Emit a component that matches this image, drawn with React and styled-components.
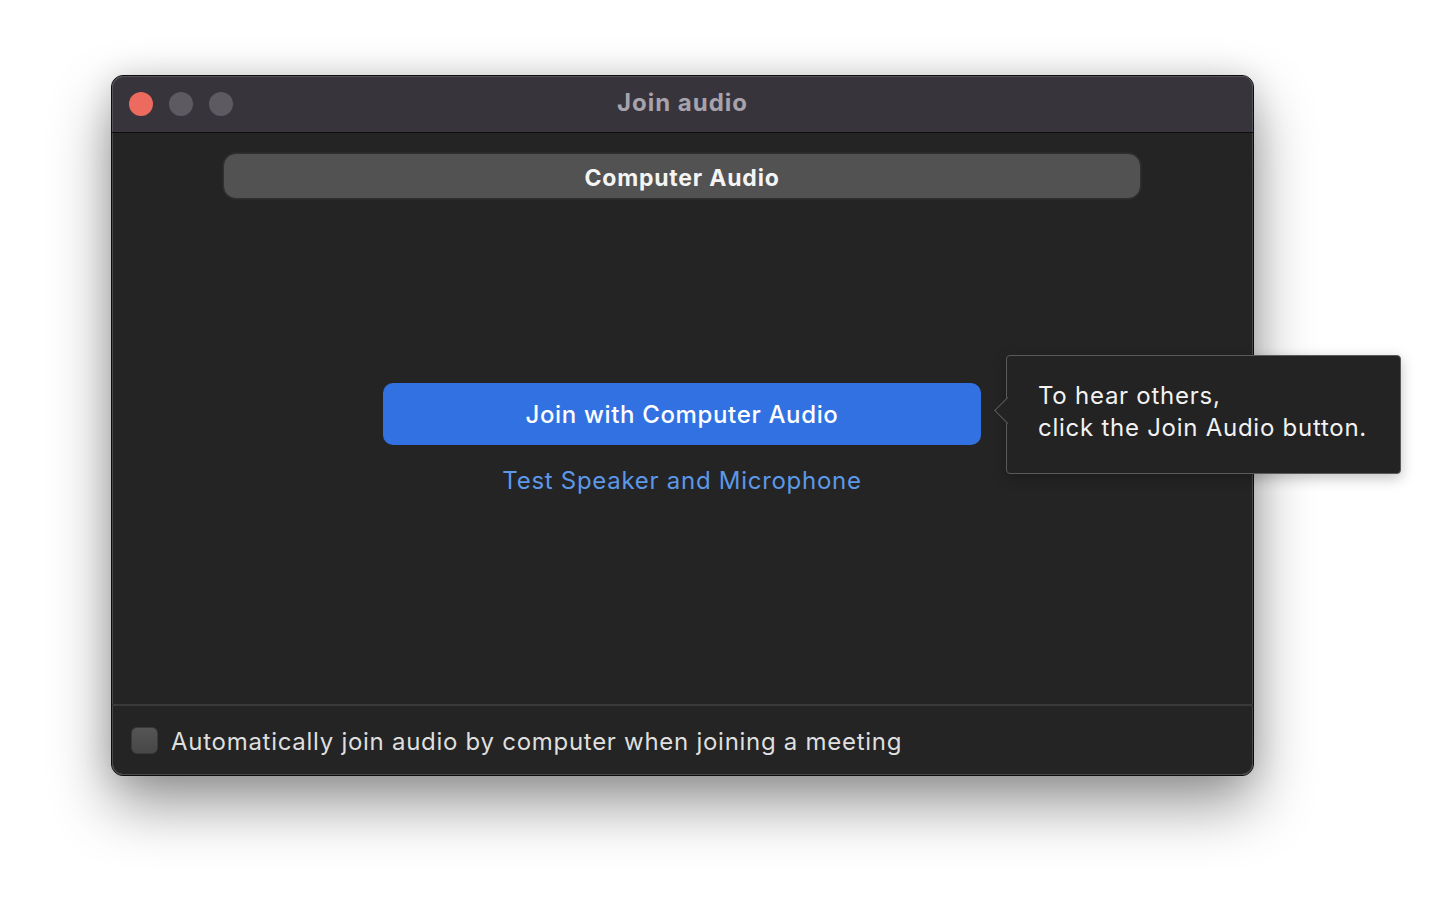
import React from "react";
import styled, { createGlobalStyle } from "styled-components";

const Global = createGlobalStyle`
  html, body { margin: 0; padding: 0; background: #ffffff; }
  body { font-family: Inter, "Noto Sans", "Liberation Sans", sans-serif; -webkit-font-smoothing: antialiased; }
  * { box-sizing: border-box; }
`;

const Page = styled.div`
  width: 1448px;
  height: 924px;
  padding: 75px 0 0 111px;
  overflow: hidden;
`;

const Window = styled.div`
  position: relative;
  width: 1143px;
  height: 701px;
  border-radius: 12px;
  border: 1px solid #0c0c0c;
  box-shadow: inset 0 0 0 1px #5c5c5e, 0 28px 60px rgba(0, 0, 0, 0.42), 0 0 30px rgba(0,0,0,0.12);
  background: #242424;
  display: flex;
  flex-direction: column;
`;

const TitleBar = styled.div`
  height: 57px;
  flex-shrink: 0;
  background: #37343c;
  border-radius: 11px 11px 0 0;
  border-bottom: 1px solid #0e0e0e;
  box-shadow: inset 1px 1px 0 #55525a, inset -1px 0 0 #55525a;
  display: flex;
  align-items: center;
  position: relative;
  padding-left: 17px;
`;

const Lights = styled.div`
  display: flex;
  gap: 16px;
`;

const Light = styled.span`
  width: 24px;
  height: 24px;
  border-radius: 50%;
  background: ${(p) => p.$color};
`;

const Title = styled.div`
  position: absolute;
  left: 0;
  right: 0;
  top: 13px;
  line-height: 28px;
  text-align: center;
  font-size: 24px;
  font-weight: 700;
  color: #a7a3ac;
  letter-spacing: 1px;
  pointer-events: none;
`;

const Body = styled.div`
  flex: 1;
  display: flex;
  flex-direction: column;
  box-shadow: inset 1px 0 0 #4a4a4a, inset -1px 0 0 #4a4a4a;
`;

const Segment = styled.div`
  margin: 20px 112px 0 111px;
  height: 46px;
  border-radius: 13px;
  background: #525252;
  border: 1px solid #2f2f2f;
  box-shadow: 0 0 0 1px #2a2a2a;
  display: flex;
  align-items: center;
  justify-content: center;
  padding-top: 3px;
  font-size: 23px;
  font-weight: 700;
  color: #f4f4f4;
  letter-spacing: 0.8px;
`;

const Main = styled.div`
  flex: 1;
  display: flex;
  flex-direction: column;
  align-items: center;
  padding-top: 184px;
  padding-right: 1px;
`;

const JoinButton = styled.button`
  width: 598px;
  height: 62px;
  border: none;
  border-radius: 10px;
  background: #3271e1;
  color: #ffffff;
  font-family: inherit;
  font-size: 24px;
  font-weight: 500;
  letter-spacing: 0.65px;
  cursor: pointer;
`;

const TestLink = styled.a`
  margin-top: 21px;
  font-size: 24px;
  line-height: 30px;
  color: #5c98e8;
  letter-spacing: 0.72px;
  text-decoration: none;
  cursor: pointer;
`;

const Footer = styled.div`
  height: 71px;
  flex-shrink: 0;
  border-top: 2px solid #3a3a3c;
  display: flex;
  align-items: center;
  gap: 13px;
  padding: 2px 0 0 19px;
  border-radius: 0 0 11px 11px;
  box-shadow: inset 1px 0 0 #4a4a4a, inset -1px 0 0 #4a4a4a, inset 0 -1px 0 #4a4a4a;
`;

const Checkbox = styled.span`
  width: 27px;
  height: 27px;
  margin-top: -3px;
  border-radius: 6px;
  background: linear-gradient(#555555, #474747);
  border: 1px solid #3a3a3a;
  flex-shrink: 0;
`;

const FooterText = styled.span`
  font-size: 24px;
  color: #dfdfdf;
  letter-spacing: 0.72px;
`;

const Tooltip = styled.div`
  position: absolute;
  left: 894px;
  top: 279px;
  width: 395px;
  height: 119px;
  background: #232323;
  border: 1.5px solid #5a5a5a;
  border-radius: 4px;
  padding: 24px 0 0 31px;
  font-size: 24px;
  line-height: 32px;
  color: #f2f2f2;
  letter-spacing: 0.74px;
  box-shadow: 0 4px 14px rgba(0,0,0,0.25);

  &::before {
    content: "";
    position: absolute;
    left: -9px;
    top: 45px;
    width: 18px;
    height: 18px;
    background: #232323;
    border-left: 1.5px solid #5a5a5a;
    border-bottom: 1.5px solid #5a5a5a;
    transform: rotate(45deg);
  }
`;

export default function App() {
  return (
    <>
      <Global />
      <Page>
        <Window>
          <TitleBar>
            <Lights>
              <Light $color="#ec6a5e" />
              <Light $color="#5d5a62" />
              <Light $color="#5d5a62" />
            </Lights>
            <Title>Join audio</Title>
          </TitleBar>
          <Body>
            <Segment>Computer Audio</Segment>
            <Main>
              <JoinButton>Join with Computer Audio</JoinButton>
              <TestLink>Test Speaker and Microphone</TestLink>
            </Main>
          </Body>
          <Footer>
            <Checkbox />
            <FooterText>Automatically join audio by computer when joining a meeting</FooterText>
          </Footer>
          <Tooltip>
            To hear others,
            <br />
            click the Join Audio button.
          </Tooltip>
        </Window>
      </Page>
    </>
  );
}
